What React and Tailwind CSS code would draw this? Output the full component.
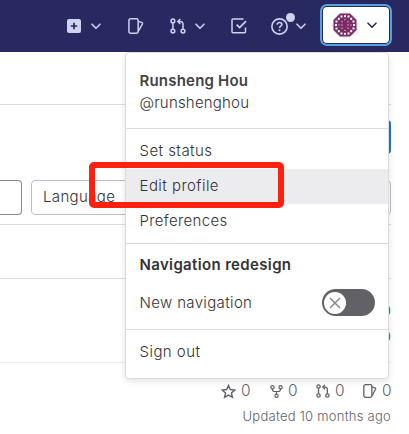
import React from 'react';

function Icon({ className = '', size = 16, children }) {
  return (
    <svg
      className={`shrink-0 ${className}`}
      width={size}
      height={size}
      viewBox="0 0 16 16"
      fill="none"
      stroke="currentColor"
      strokeWidth="1.5"
    >
      {children}
    </svg>
  );
}

const Chevron = ({ className }) => (
  <Icon className={className}>
    <path d="M4 6.2l4 4 4-4" strokeWidth="1.6" strokeLinecap="round" strokeLinejoin="round" />
  </Icon>
);

const Issues = (props) => (
  <Icon {...props}>
    <rect x=".95" y=".75" width="9.2" height="14.5" rx="1.7" />
    <path d="M10.2 3.4l3.4 1a1.2 1.2 0 0 1 .8 1.6l-4.2 7.4" strokeLinejoin="round" />
  </Icon>
);

const MergeRequest = (props) => (
  <Icon {...props}>
    <circle cx="2.9" cy="2.9" r="1.9" />
    <circle cx="2.9" cy="13.1" r="1.9" />
    <circle cx="13" cy="13.1" r="1.9" />
    <path d="M2.9 4.8v6.4M13 11.2V6a2.5 2.5 0 0 0-2.5-2.5H8.4" />
    <path d="M10.3 1L7.8 3.5 10.3 6" />
  </Icon>
);

const Fork = (props) => (
  <Icon {...props}>
    <circle cx="3" cy="2.9" r="2" />
    <circle cx="13" cy="2.9" r="2" />
    <circle cx="8" cy="13.1" r="2" />
    <path d="M3 4.9C3 7 4 8 5.6 8h4.8C12 8 13 7 13 4.9M8 8v3.1" />
  </Icon>
);

const Star = (props) => (
  <Icon {...props}>
    <path d="M8 1.6l1.9 4.3 4.8.5-3.6 3.1 1.1 4.7L8 11.8l-4.2 2.4 1.1-4.7-3.6-3.1 4.8-.5z" />
  </Icon>
);

function Avatar() {
  const dots = [
    [-3, -3.2], [0, -5.4], [3, -3.2],
    [-3, 3.2], [0, 5.4], [3, 3.2],
    [-3, 0], [3, 0], [-6, 0], [6, 0],
  ];
  const gaps = [
    [-8.5, -3.5], [-6.2, -6.2], [-3.5, -8.5],
    [8.5, -3.5], [6.2, -6.2], [3.5, -8.5],
    [-8.5, 3.5], [-6.2, 6.2], [-3.5, 8.5],
    [8.5, 3.5], [6.2, 6.2], [3.5, 8.5],
    [0, -8.8], [0, 8.8], [-9, 0], [9, 0],
  ];
  return (
    <svg width="26" height="26" viewBox="-13 -13 26 26" className="shrink-0">
      <circle r="12.3" fill="#fff" stroke="#dcdcef" strokeWidth="1" />
      <path d="M-5-11.5H5L11.5-5V5L5 11.5H-5L-11.5 5V-5z" fill="#7d2b66" />
      <g fill="#fff">
        {gaps.map(([x, y]) => (
          <rect key={`${x},${y}`} x={x - 1} y={y - 1} width="2" height="2" />
        ))}
        {dots.map(([x, y]) => (
          <rect key={`${x},${y}`} x={x - 0.5} y={y - 0.5} width="1" height="1" />
        ))}
      </g>
    </svg>
  );
}

function Navbar() {
  return (
    <header className="flex h-[52px] items-center bg-[#292961] pl-[66px] text-[#d1d1f0]">
      <Icon>
        <rect x="1" y="1" width="14" height="14" rx="2" fill="currentColor" stroke="none" />
        <path d="M8 4.8v6.4M4.8 8h6.4" stroke="#292961" strokeWidth="1.7" />
      </Icon>
      <Chevron className="ml-1.5" />
      <Issues className="ml-6" />
      <MergeRequest className="ml-[26px]" />
      <Chevron className="ml-1.5" />
      <Icon className="ml-[23px]">
        <path d="M14.5 9.5v4.2a1 1 0 0 1-1 1H2a1 1 0 0 1-1-1V2a1 1 0 0 1 1-1h10.5" />
        <path d="M5.6 6.6l3 3L15 3.2" strokeWidth="1.7" />
      </Icon>
      <div className="relative ml-6">
        <Icon size={17}>
          <circle cx="8" cy="8" r="7.2" />
          <path d="M5.8 6.3C6 4.9 6.9 4.3 8 4.3c1.3 0 2.2.8 2.2 1.9C10.2 7.8 8 7.7 8 9.5" />
          <circle cx="8" cy="11.5" r=".9" fill="currentColor" stroke="none" />
        </Icon>
        <span className="absolute -top-[5px] left-[15px] size-[9px] rounded-full bg-[#d1d1f0]" />
      </div>
      <Chevron className="ml-[5px]" />
      <button className="mb-0.5 ml-[14px] flex h-[36px] w-[66px] items-center rounded bg-white pl-[9px] text-[#292961] ring-2 ring-[#5a9fe6] ring-offset-1 ring-offset-[#20304a]">
        <Avatar />
        <Chevron className="ml-1.5" />
      </button>
    </header>
  );
}

function Stat({ icon }) {
  return (
    <span className="flex w-[47px] items-center justify-end gap-[5px]">
      {icon}
      <span className="w-[9px]">0</span>
    </span>
  );
}

function Page() {
  return (
    <main className="pr-[18px]">
      <div className="h-[53px] border-b border-[#dcdcde]" />
      <div className="flex h-[75px] justify-end pt-[15px]">
        <div className="h-[34px] w-20 rounded bg-[#1f75cb]" />
      </div>
      <div className="flex h-[45px] gap-[9px] border-b border-[#dcdcde]">
        <div className="h-[35px] w-[22px] rounded-r border border-l-0 border-[#89888d]" />
        <div className="flex h-[35px] grow items-center rounded border border-[#bfbfc3] pl-[11px] text-[15px] font-light tracking-[0.35px] text-[#333238]">
          Language
        </div>
      </div>
      <div className="h-[54px] border-b border-[#dcdcde]" />
      <div className="flex h-[84px] flex-col items-end border-b border-[#ececef] pt-[19px] text-[15px] leading-[26px] text-[#1f75cb]">
        <span>0</span>
        <span>0</span>
      </div>
      <div className="mt-[18px] flex h-5 items-center justify-end text-[15.5px] font-light text-[#626168]">
        <Stat icon={<Star size={15} />} />
        <Stat icon={<Fork size={13} />} />
        <Stat icon={<MergeRequest size={14} />} />
        <Stat icon={<Issues size={14} />} />
      </div>
      <p className="mt-[5px] text-right text-[13px] font-light leading-5 tracking-[0.25px] text-[#626168]">
        Updated 10 months ago
      </p>
    </main>
  );
}

function UserMenu() {
  return (
    <div className="absolute left-[125px] top-[52px] flex h-[327px] w-[264px] flex-col rounded border border-[#dcdcde] bg-white text-[15px] font-light tracking-[0.45px] text-[#333238] shadow-[0_2px_6px_rgba(0,0,0,0.12)]">
      <div className="h-[76px] border-b border-[#dcdcde] pl-[13.5px] pt-[17px] leading-[22px]">
        <div className="font-semibold tracking-[0.2px] text-[#434248]">Runsheng Hou</div>
        <div className="tracking-[0.2px]">@runshenghou</div>
      </div>
      <div className="h-[115px] border-b border-[#dcdcde] pt-[5px]">
        <div className="h-[35px] pl-[13.5px] leading-[33px]">Set status</div>
        <div className="h-[35px] bg-[#ececef] pl-[13.5px] leading-[33px]">Edit profile</div>
        <div className="h-[35px] pl-[13.5px] leading-[33px] tracking-[0.35px]">Preferences</div>
      </div>
      <div className="h-[86px] border-b border-[#dcdcde] pl-[13.5px] pr-[13px] pt-[11px]">
        <div className="font-semibold leading-[20px] tracking-[0.35px]">Navigation redesign</div>
        <div className="mt-[14px] flex h-[27px] items-center justify-between">
          <span className="pt-0.5 tracking-[0.35px]">New navigation</span>
          <span className="flex h-[27px] w-[53px] items-center rounded-full bg-[#626168] pl-[2px]">
            <span className="flex size-[22px] items-center justify-center rounded-full bg-white text-[#89888d]">
              <Icon size={16}>
                <path d="M3 3l10 10M13 3L3 13" />
              </Icon>
            </span>
          </span>
        </div>
      </div>
      <div className="pl-[13.5px] pt-[5px] leading-[34px]">Sign out</div>
    </div>
  );
}

export default function App() {
  return (
    <div className="relative h-[434px] w-[409px] overflow-hidden bg-white font-['Inter','Liberation_Sans',sans-serif]">
      <Navbar />
      <Page />
      <UserMenu />
      <div className="absolute left-[89px] top-[162px] h-[46px] w-[195px] rounded-[5px] border-6 border-[#ff2010]" />
    </div>
  );
}
